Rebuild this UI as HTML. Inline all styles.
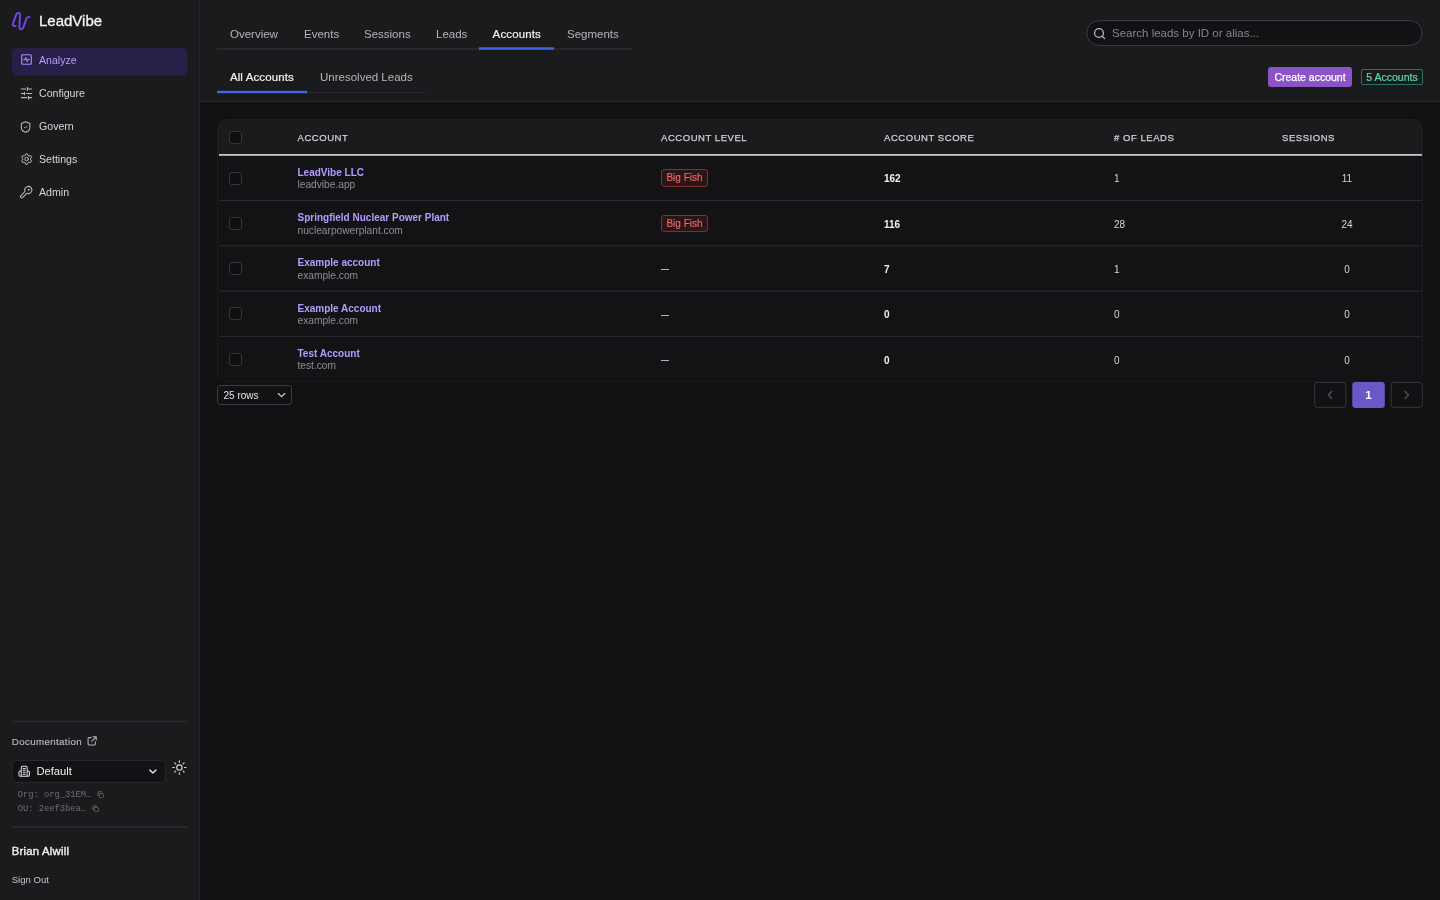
<!DOCTYPE html>
<html>
<head>
<meta charset="utf-8">
<title>LeadVibe</title>
<style>
*{box-sizing:border-box;margin:0;padding:0}
html,body{width:1440px;height:900px;overflow:hidden;background:#111114;font-family:"Liberation Sans",sans-serif;color:#e8e8ea}
.abs{position:absolute}
.t{position:absolute;white-space:nowrap;line-height:1}
#sidebar{position:absolute;left:0;top:0;width:200px;height:900px;background:#1a1b1d;border-right:1px solid #222327;box-shadow:inset -1px 0 0 #1d1e21}
#header{position:absolute;left:200px;top:0;width:1240px;height:102px;background:#1a1b1d;border-bottom:1px solid #26272b}
.nav{position:absolute;left:39px;font-size:10.6px;color:#d6d6da;line-height:1;white-space:nowrap}
.ico{position:absolute;fill:none;stroke:#bdbdc1;stroke-width:1.6;stroke-linecap:round;stroke-linejoin:round}
.tab{position:absolute;top:29px;font-size:11.5px;color:#b4b5ba;line-height:1;white-space:nowrap}
.stab{position:absolute;top:72px;font-size:11.5px;color:#b4b5ba;line-height:1;white-space:nowrap}
.hline{position:absolute;height:1px;background:#2a2b30}
.th{position:absolute;top:133px;font-size:9.5px;letter-spacing:.55px;color:#cfd0d4;-webkit-text-stroke:.25px #cfd0d4;line-height:1;white-space:nowrap}
.cb{position:absolute;left:229px;width:13px;height:13px;border:1px solid #36373c;border-radius:3px;background:#0f0f11}
.nm{position:absolute;left:297.5px;font-size:10px;font-weight:bold;color:#b69cff;line-height:1;white-space:nowrap}
.dm{position:absolute;left:297.5px;font-size:10.2px;color:#8d8e94;line-height:1;white-space:nowrap}
.bf{position:absolute;left:661px;width:47px;height:17.5px;border:1px solid #7d2f31;border-radius:3px;background:#2b1517;color:#ee6766;font-size:10px;line-height:16.4px;text-align:center;white-space:nowrap;-webkit-text-stroke:.15px #ee6766}
.ds{position:absolute;left:661px;width:8px;height:1px;background:#b4b5ba}
.sc{position:absolute;left:884px;font-size:10px;font-weight:bold;color:#f2f2f4;line-height:1;white-space:nowrap}
.ld{position:absolute;left:1114px;font-size:10px;color:#d4d4d8;line-height:1;white-space:nowrap}
.ss{position:absolute;left:1327px;width:40px;text-align:center;font-size:10px;color:#d4d4d8;line-height:1;white-space:nowrap}
.rline{position:absolute;left:218px;width:1204px;height:1px;background:#26272b}
</style>
</head>
<body>
<div id="wrap" style="position:absolute;left:0;top:0;width:1440px;height:900px;will-change:transform">
<div id="sidebar">
<!-- logo -->
<svg class="abs" style="left:0;top:0" width="40" height="40" viewBox="0 0 40 40" fill="none" stroke="#7a41f0" stroke-width="1.9" stroke-linecap="round" stroke-linejoin="round"><path d="M15.6 26 L14 25.9 C12.8 25.8 12.5 24.8 12.9 23.7 L16.3 14.4 C16.8 13 17.8 12.75 18.7 12.85 C19.7 13 20.15 13.7 20.1 14.6 L19.4 26.6 C19.3 28.5 20.1 29.3 21.1 29.3 C22.2 29.3 22.9 28.4 23.3 27.4 L26.3 19.2 C26.9 17.6 27.9 16.9 29.5 16.9"/></svg>
<div class="t" style="left:39px;top:13px;font-size:15px;color:#f4f4f6;-webkit-text-stroke:.3px #f4f4f6">LeadVibe</div>
<!-- analyze -->
<svg class="abs" style="left:0;top:40px" width="200" height="44"><rect x="11.8" y="8" width="175.8" height="27.5" rx="5.5" fill="#271f48"/></svg>
<svg class="ico" style="left:20.6px;top:54.2px;stroke:#a78bfa;stroke-width:1.3" width="11" height="11" viewBox="0 0 12 12"><rect x="0.8" y="0.8" width="10.4" height="10.4" rx="1.1"/><path d="M2.9 6.3h1.2l1.1-2.5 1.5 4.6 1.1-2.6h1.3" stroke-width="1.15"/></svg>
<div class="nav" style="top:55px;color:#b69cff">Analyze</div>
<!-- configure -->
<svg class="ico" style="left:14px;top:82px;stroke-width:1.1" width="24" height="20" viewBox="0 0 24 20"><path d="M7.4 7H11.6M13.4 5.6V8.4M13.4 7H17.6M7.4 11.45H10.4M10.4 10.2V12.7M12.4 11.45H17.6M7.4 15.6H12.6M14.5 14.3V16.9M14.5 15.6H17.6"/></svg>
<div class="nav" style="top:88px">Configure</div>
<!-- govern -->
<svg class="ico" style="left:20.3px;top:120.5px;stroke-width:1.1" width="11.2" height="12.1" viewBox="0 0 12 13"><path d="M6 0.9 L10.6 2.6 V6.6 C10.6 9.4 8.6 11.2 6 12.2 C3.4 11.2 1.4 9.4 1.4 6.6 V2.6 Z"/><path d="M4.5 6.5l1.1 1.1 2-2.1" stroke-width="1" stroke="#a4a4a8"/></svg>
<div class="nav" style="top:121px">Govern</div>
<!-- settings -->
<svg class="ico" style="left:20.8px;top:153.1px;stroke-width:1" width="11.2" height="12.1" viewBox="0 0 12 13"><path d="M7.95 3.12 L6.80 0.81 L5.20 0.81 L4.05 3.12 L1.47 2.96 L0.67 4.35 L2.10 6.50 L0.67 8.65 L1.47 10.04 L4.05 9.88 L5.20 12.19 L6.80 12.19 L7.95 9.88 L10.53 10.04 L11.33 8.65 L9.90 6.50 L11.33 4.35 L10.53 2.96 Z"/><circle cx="6" cy="6.5" r="1.9"/></svg>
<div class="nav" style="top:154px">Settings</div>
<!-- admin -->
<svg class="ico" style="left:19px;top:184px;stroke-width:1.05" width="14" height="15" viewBox="0 0 14 15"><path d="M6.03 7.5 A3.6 3.6 0 1 1 7.8 9.27 L3.48 13.58 A1.25 1.25 0 0 1 1.72 11.82 Z"/><circle cx="9.7" cy="5.7" r="0.6" fill="#bdbdc1" stroke-width="0.6"/></svg>
<div class="nav" style="top:187px">Admin</div>

<!-- bottom -->
<svg class="abs" style="left:0;top:715px" width="200" height="12"><rect x="11.2" y="5.6" width="176.6" height="1.7" fill="#27282c"/></svg>
<div class="t" style="left:11.8px;top:737.4px;font-size:9.7px;letter-spacing:.39px;color:#b4b5ba;-webkit-text-stroke:.2px #b4b5ba">Documentation</div>
<svg class="ico" style="left:87.2px;top:735.8px;stroke:#b4b5ba;stroke-width:1.15" width="10" height="10" viewBox="0 0 11 11"><path d="M4.6 1.8H2.2a1 1 0 0 0-1 1v6a1 1 0 0 0 1 1h6a1 1 0 0 0 1-1V6.4M6.6 0.8h3.6v3.6M10 1 5.2 5.8"/></svg>
<svg class="abs" style="left:0;top:750px" width="200" height="40"><rect x="12.1" y="10.5" width="153.2" height="22" rx="4.5" fill="#121214" stroke="#28292d" stroke-width="1"/></svg>
<svg class="ico" style="left:18px;top:765px;stroke:#e4e4e8;stroke-width:1.05" width="12.4" height="12.4" viewBox="0 0 13 13"><path d="M3.4 11.8V2.6a1.4 1.4 0 0 1 1.4-1.4h3.4a1.4 1.4 0 0 1 1.4 1.4v9.2zM3.4 6.4H2.2a1.2 1.2 0 0 0-1.2 1.2v3a1.2 1.2 0 0 0 1.2 1.2h8.6a1.2 1.2 0 0 0 1.2-1.2v-3a1.2 1.2 0 0 0-1.2-1.2H9.6M5.4 3.6h2.2M5.4 5.6h2.2M5.4 7.6h2.2M5.4 9.6h2.2"/></svg>
<div class="t" style="left:36.4px;top:765.7px;font-size:11.2px;color:#f0f0f2">Default</div>
<svg class="ico" style="left:148px;top:768px;stroke:#f0f0f2;stroke-width:1.35" width="10" height="7" viewBox="0 0 10 7"><path d="M1.8 1.9 4.9 4.9 8 1.9"/></svg>
<svg class="ico" style="left:172px;top:760.1px;stroke:#d4d4d8;stroke-width:1.15" width="15" height="15" viewBox="0 0 15 15"><circle cx="7.4" cy="7.5" r="2.7"/><path d="M7.4 0.8v1.5M7.4 12.7v1.5M0.7 7.5h1.6M12.5 7.5h1.6M2.7 2.8l1 1M11.1 11.2l1 1M2.7 12.2l1-1M11.1 3.8l1-1"/></svg>
<div class="t" style="left:17.8px;top:791.4px;font-size:8.75px;font-family:'Liberation Mono',monospace;color:#6c6d74">Org: org_31EM…</div>
<svg class="ico" style="left:96.8px;top:791.2px;stroke:#6c6d74;stroke-width:1" width="7" height="7.2" viewBox="0 0 8 8.4"><rect x="2.6" y="2.8" width="4.8" height="5" rx="1.1"/><path d="M1 5.4V1.8a1 1 0 0 1 1-1h3.2"/></svg>
<div class="t" style="left:17.8px;top:805.3px;font-size:8.75px;font-family:'Liberation Mono',monospace;color:#6c6d74">OU: 2eef3bea…</div>
<svg class="ico" style="left:91.5px;top:805.1px;stroke:#6c6d74;stroke-width:1" width="7" height="7.2" viewBox="0 0 8 8.4"><rect x="2.6" y="2.8" width="4.8" height="5" rx="1.1"/><path d="M1 5.4V1.8a1 1 0 0 1 1-1h3.2"/></svg>
<svg class="abs" style="left:0;top:820px" width="200" height="12"><rect x="11.2" y="6.2" width="176.6" height="1.7" fill="#292a2e"/></svg>
<div class="t" style="left:11.7px;top:845.6px;font-size:11.3px;letter-spacing:.24px;color:#f4f4f6;-webkit-text-stroke:.35px #f4f4f6">Brian Alwill</div>
<div class="t" style="left:11.7px;top:875.3px;font-size:9.6px;color:#c4c5ca">Sign Out</div>
</div>
<div id="header">
<!-- coordinates inside header are relative to x=200 -->
<div class="tab" style="left:30px">Overview</div>
<div class="tab" style="left:104px">Events</div>
<div class="tab" style="left:164px">Sessions</div>
<div class="tab" style="left:236px">Leads</div>
<div class="tab" style="left:292.6px;color:#f4f4f6;letter-spacing:.13px;-webkit-text-stroke:.2px #f4f4f6">Accounts</div>
<div class="tab" style="left:367px">Segments</div>
<div class="hline" style="left:17px;top:48px;width:415px;height:2px;background:#27282c"></div>
<svg class="abs" style="left:279px;top:46px" width="75" height="5"><rect x="0" y="1.3" width="75" height="2.4" fill="#4364e6"/></svg>
<div class="stab" style="left:29.9px;color:#f4f4f6;letter-spacing:.12px;-webkit-text-stroke:.2px #f4f4f6">All Accounts</div>
<div class="stab" style="left:120px">Unresolved Leads</div>
<div class="hline" style="left:17px;top:92px;width:208px"></div>
<svg class="abs" style="left:17px;top:89px" width="91" height="6"><rect x="0" y="1.8" width="90.1" height="2.4" fill="#4364e6"/></svg>
<!-- search -->
<svg class="abs" style="left:880px;top:14px" width="350" height="38"><rect x="6.9" y="6.55" width="335" height="24.9" rx="12.45" fill="#121214" stroke="#3b3c42" stroke-width="1"/></svg>
<svg class="ico" style="left:893px;top:26.9px;stroke:#bcbcc0;stroke-width:1.25" width="13" height="13" viewBox="0 0 13 13"><circle cx="6" cy="6" r="4.45"/><path d="M9.3 9.3l2.3 2.3"/></svg>
<div class="t" style="left:912px;top:28px;font-size:11.5px;color:#86878e">Search leads by ID or alias...</div>
<!-- buttons -->
<div class="abs" style="left:1068px;top:67px;width:84px;height:20px;border-radius:3px;background:#8b53c6;color:#fff;font-size:10.5px;line-height:21px;text-align:center;-webkit-text-stroke:.25px #fff">Create account</div>
<div class="abs" style="left:1161px;top:69px;width:62px;height:16px;border-radius:2px;border:1px solid #2a7561;color:#63d6ae;font-size:10.5px;line-height:15px;text-align:center;-webkit-text-stroke:.2px #63d6ae">5 Accounts</div>
</div>

<!-- table -->
<div class="abs" style="left:217px;top:119px;width:1206px;height:263px;border:1px solid #1e1f22;border-bottom-color:#18191b;border-radius:10px;background:#131315;overflow:hidden">
<div class="abs" style="left:0;top:0;width:1206px;height:35px;background:#1a1b1d"></div>
</div>
<svg class="abs" style="left:0;top:0" width="1440" height="400">
<rect x="219" y="154" width="1203" height="1.8" fill="#c6c6c8"/>
<rect x="219" y="199.90" width="1203" height="1.15" fill="#292a2e"/>
<rect x="219" y="245.20" width="1203" height="1.15" fill="#292a2e"/>
<rect x="219" y="290.50" width="1203" height="1.15" fill="#292a2e"/>
<rect x="219" y="335.80" width="1203" height="1.15" fill="#292a2e"/>
</svg>
<div class="cb" style="top:130.5px"></div>
<div class="th" style="left:297.5px">ACCOUNT</div>
<div class="th" style="left:661px">ACCOUNT LEVEL</div>
<div class="th" style="left:884px">ACCOUNT SCORE</div>
<div class="th" style="left:1114px"># OF LEADS</div>
<div class="th" style="left:1282px">SESSIONS</div>
<div class="cb" style="top:171.5px"></div>
<div class="nm" style="top:167.6px">LeadVibe LLC</div><div class="dm" style="top:180.2px">leadvibe.app</div>
<div class="bf" style="top:169.25px">Big Fish</div>
<div class="sc" style="top:174.3px">162</div><div class="ld" style="top:174.3px">1</div><div class="ss" style="top:174.3px">11</div>
<div class="cb" style="top:216.8px"></div>
<div class="nm" style="top:212.9px">Springfield Nuclear Power Plant</div><div class="dm" style="top:225.5px">nuclearpowerplant.com</div>
<div class="bf" style="top:214.55px">Big Fish</div>
<div class="sc" style="top:219.6px">116</div><div class="ld" style="top:219.6px">28</div><div class="ss" style="top:219.6px">24</div>
<div class="cb" style="top:262.1px"></div>
<div class="nm" style="top:258.2px">Example account</div><div class="dm" style="top:270.8px">example.com</div>
<div class="ds" style="top:269.4px"></div>
<div class="sc" style="top:264.9px">7</div><div class="ld" style="top:264.9px">1</div><div class="ss" style="top:264.9px">0</div>
<div class="cb" style="top:307.4px"></div>
<div class="nm" style="top:303.5px">Example Account</div><div class="dm" style="top:316.1px">example.com</div>
<div class="ds" style="top:314.7px"></div>
<div class="sc" style="top:310.2px">0</div><div class="ld" style="top:310.2px">0</div><div class="ss" style="top:310.2px">0</div>
<div class="cb" style="top:352.7px"></div>
<div class="nm" style="top:348.8px">Test Account</div><div class="dm" style="top:361.4px">test.com</div>
<div class="ds" style="top:360.0px"></div>
<div class="sc" style="top:355.5px">0</div><div class="ld" style="top:355.5px">0</div><div class="ss" style="top:355.5px">0</div>

<!-- footer -->
<div class="abs" style="left:217px;top:385px;width:75px;height:20px;border:1px solid #3a3b40;border-radius:3px;background:#121214"></div>
<div class="t" style="left:223.5px;top:390.5px;font-size:10px;color:#e4e4e8">25 rows</div>
<svg class="ico" style="left:277px;top:392px;stroke:#d4d4d8;stroke-width:1.1" width="9" height="7" viewBox="0 0 9 7"><path d="M1.3 1.5 4.5 4.7 7.7 1.5"/></svg>
<svg class="abs" style="left:1300px;top:376px" width="140" height="40">
<rect x="14.7" y="6.4" width="31.2" height="25" rx="3" fill="#121214" stroke="#37383d" stroke-width="1"/>
<rect x="52.3" y="5.9" width="32.5" height="26" rx="3.2" fill="#6c57c9"/>
<rect x="91.1" y="6.4" width="31.2" height="25" rx="3" fill="#121214" stroke="#37383d" stroke-width="1"/>
<path d="M31.6 15.4 28.4 18.9 31.6 22.4" fill="none" stroke="#4d4e55" stroke-width="1.5" stroke-linecap="round" stroke-linejoin="round"/>
<path d="M105.2 15.4 108.4 18.9 105.2 22.4" fill="none" stroke="#4d4e55" stroke-width="1.5" stroke-linecap="round" stroke-linejoin="round"/>
</svg>
<div class="abs" style="left:1352px;top:382px;width:33px;height:26px;color:#fff;font-size:11.5px;font-weight:bold;line-height:26px;text-align:center">1</div>
</div>
</body>
</html>
